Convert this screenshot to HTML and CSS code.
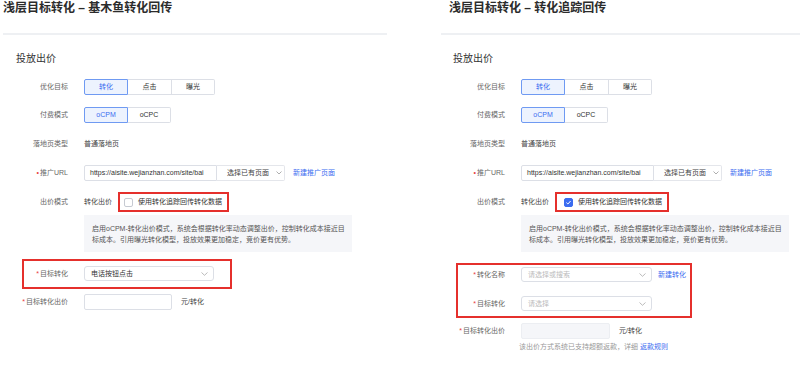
FILE: index.html
```html
<!DOCTYPE html>
<html lang="zh-CN">
<head>
<meta charset="utf-8">
<title>浅层目标转化</title>
<link rel="stylesheet" href="styles.css">
</head>
<body>
<div class="page">
  <div class="panel left">
    <div class="title">浅层目标转化 – 基木鱼转化回传</div>
    <div class="sep"></div>
    <div class="body">
      <div class="section">投放出价</div>
      <div class="row r1">
        <div class="label">优化目标</div>
        <div class="seg"><span class="on">转化</span><span>点击</span><span>曝光</span></div>
      </div>
      <div class="row r2">
        <div class="label">付费模式</div>
        <div class="seg"><span class="on">oCPM</span><span>oCPC</span></div>
      </div>
      <div class="row r3">
        <div class="label">落地页类型</div>
        <div class="value">普通落地页</div>
      </div>
      <div class="row r4">
        <div class="label"><span class="req">•</span>推广URL</div>
        <div class="ctrls">
          <div class="url">https://aisite.wejianzhan.com/site/bai</div>
          <div class="pick">选择已有页面<svg class="chev" width="6" height="4" viewBox="0 0 6 4"><polyline points="0.5,0.5 3,3 5.5,0.5" fill="none" stroke="#999" stroke-width="0.8"/></svg></div>
          <a class="link">新建推广页面</a>
        </div>
      </div>
      <div class="row r5">
        <div class="label">出价模式</div>
        <div class="ctrls">
          <span class="value">转化出价</span>
          <div class="mark cbox"><span class="check"></span><span>使用转化追踪回传转化数据</span></div>
        </div>
      </div>
      <div class="info">启用oCPM-转化出价模式，系统会根据转化率动态调整出价，控制转化成本接近目<br>标成本。引用曝光转化模型，投放效果更加稳定，竞价更有优势。</div>
      <div class="mark box-l">
        <div class="row in">
          <div class="label"><span class="req">*</span>目标转化</div>
          <div class="select filled">电话按钮点击<svg class="chev" width="7" height="4" viewBox="0 0 7 4"><polyline points="0.5,0.5 3.5,3.3 6.5,0.5" fill="none" stroke="#aaa" stroke-width="0.8"/></svg></div>
        </div>
      </div>
      <div class="row bid">
        <div class="label"><span class="req">*</span>目标转化出价</div>
        <div class="ctrls"><div class="num"></div><span class="unit">元/转化</span></div>
      </div>
    </div>
  </div>

  <div class="panel right">
    <div class="title">浅层目标转化 – 转化追踪回传</div>
    <div class="sep"></div>
    <div class="body">
      <div class="section">投放出价</div>
      <div class="row r1">
        <div class="label">优化目标</div>
        <div class="seg"><span class="on">转化</span><span>点击</span><span>曝光</span></div>
      </div>
      <div class="row r2">
        <div class="label">付费模式</div>
        <div class="seg"><span class="on">oCPM</span><span>oCPC</span></div>
      </div>
      <div class="row r3">
        <div class="label">落地页类型</div>
        <div class="value">普通落地页</div>
      </div>
      <div class="row r4">
        <div class="label"><span class="req">•</span>推广URL</div>
        <div class="ctrls">
          <div class="url">https://aisite.wejianzhan.com/site/bai</div>
          <div class="pick">选择已有页面<svg class="chev" width="6" height="4" viewBox="0 0 6 4"><polyline points="0.5,0.5 3,3 5.5,0.5" fill="none" stroke="#999" stroke-width="0.8"/></svg></div>
          <a class="link">新建推广页面</a>
        </div>
      </div>
      <div class="row r5">
        <div class="label">出价模式</div>
        <div class="ctrls">
          <span class="value">转化出价</span>
          <div class="mark cbox cbox-r"><span class="check on"><svg width="7" height="7" viewBox="0 0 7 7"><polyline points="1.4,3.6 2.9,5 5.6,2" fill="none" stroke="#fff" stroke-width="1"/></svg></span><span>使用转化追踪回传转化数据</span></div>
        </div>
      </div>
      <div class="info">启用oCPM-转化出价模式，系统会根据转化率动态调整出价，控制转化成本接近目<br>标成本。引用曝光转化模型，投放效果更加稳定，竞价更有优势。</div>
      <div class="mark box-r">
        <div class="row in">
          <div class="label"><span class="req">*</span>转化名称</div>
          <div class="ctrls">
            <div class="select">请选择或搜索<svg class="chev" width="7" height="4" viewBox="0 0 7 4"><polyline points="0.5,0.5 3.5,3.3 6.5,0.5" fill="none" stroke="#aaa" stroke-width="0.8"/></svg></div>
            <a class="link">新建转化</a>
          </div>
        </div>
        <div class="row in in2">
          <div class="label"><span class="req">*</span>目标转化</div>
          <div class="select">请选择<svg class="chev" width="7" height="4" viewBox="0 0 7 4"><polyline points="0.5,0.5 3.5,3.3 6.5,0.5" fill="none" stroke="#aaa" stroke-width="0.8"/></svg></div>
        </div>
      </div>
      <div class="row bid">
        <div class="label"><span class="req">*</span>目标转化出价</div>
        <div class="ctrls"><div class="num disabled"></div><span class="unit">元/转化</span></div>
      </div>
      <div class="hint">该出价方式系统已支持超额返款，详细 <a class="link">返款规则</a></div>
    </div>
  </div>
</div>
</body>
</html>
```

FILE: styles.css
```css
* { box-sizing: border-box; }
body {
  margin: 0;
  background: #fff;
  font-family: "Liberation Sans", "Noto Sans CJK SC", sans-serif;
  color: #333;
}
.page {
  display: flex;
  width: 800px;
  height: 366px;
  overflow: hidden;
}
.panel { width: 400px; flex: none; }
.title {
  font-size: 12px;
  line-height: 15px;
  font-weight: bold;
  color: #2c2c2c;
  margin-top: 1px;
  white-space: nowrap;
}
.left .title { margin-left: 3px; }
.right .title { margin-left: 49px; }
.sep {
  height: 2px;
  background: #eef0f3;
  margin-top: 17px;
}
.left .sep { margin-left: 3px; width: 384px; }
.right .sep { margin-left: 41px; }
.left .body { margin-left: 3px; }
.right .body { margin-left: 40px; }
.section {
  font-size: 10px;
  line-height: 14px;
  margin-top: 17px;
  padding-left: 13px;
  color: #333;
}
.row {
  display: grid;
  grid-template-columns: 65px auto;
  column-gap: 16px;
  align-items: center;
  height: 16px;
  font-size: 7px;
  line-height: 10px;
  white-space: nowrap;
}
.label { text-align: right; color: #666; }
.req { color: #e8413c; margin-right: 1px; }
.value { color: #444; }
.r1 { margin-top: 13px; }
.r2 { margin-top: 12px; }
.r3 { margin-top: 13px; }
.r4 { margin-top: 13px; }
.r5 { margin-top: 11px; height: 20px; }
.seg { display: flex; }
.seg span {
  width: 44px;
  height: 16px;
  border: 1px solid #dcdfe6;
  border-left: none;
  display: flex;
  align-items: center;
  justify-content: center;
  color: #333;
}
.seg span:first-child { border-left: 1px solid #dcdfe6; border-radius: 2px 0 0 2px; }
.seg span:last-child { width: 43px; border-radius: 0 2px 2px 0; }
.seg span.on {
  background: #edf3fe;
  border: 1px solid #6f9af2;
  color: #3b6cf0;
}
.seg span.on + span { border-left: none; }
.ctrls { display: flex; align-items: center; }
.url {
  width: 133px;
  height: 16px;
  border: 1px solid #dcdfe6;
  border-radius: 2px 0 0 2px;
  padding-left: 5px;
  display: flex;
  align-items: center;
  overflow: hidden;
  color: #333;
}
.pick {
  width: 68px;
  height: 16px;
  border: 1px solid #e4e6eb;
  border-left: none;
  border-radius: 0 2px 2px 0;
  display: flex;
  align-items: center;
  padding-left: 10px;
  color: #444;
}
.pick .chev { margin-left: 7px; }
.link { color: #3b6cf0; }
.ctrls > .link { margin-left: 8px; }
.mark { border: 2px solid #e5302c; }
.cbox {
  height: 20px;
  margin-left: 6px;
  display: flex;
  align-items: center;
  padding: 0 5px 0 4px;
  color: #333;
}
.cbox-r { padding-left: 7px; }
.check {
  width: 9px;
  height: 9px;
  border: 1px solid #c6cad2;
  border-radius: 2px;
  background: #fff;
  margin-right: 5px;
  display: flex;
  align-items: center;
  justify-content: center;
}
.check.on { background: #3b6cf0; border-color: #3b6cf0; }
.info {
  margin-top: 3px;
  margin-left: 81px;
  width: 268px;
  height: 37px;
  background: #f5f6f9;
  padding: 8px 0 0 8px;
  font-size: 7px;
  line-height: 11px;
  color: #555;
  white-space: nowrap;
}
.box-l {
  margin-top: 7px;
  margin-left: 19px;
  width: 210px;
  height: 30px;
  padding-top: 5px;
}
.box-l .row.in { grid-template-columns: 44px auto; height: 15px; }
.box-r {
  margin-top: 11px;
  margin-left: 16px;
  width: 236px;
  height: 55px;
  padding-top: 2px;
}
.box-r .row.in { grid-template-columns: 47px auto; height: 15px; }
.box-r .row.in2 { margin-top: 14px; }
.box-r .ctrls > .link { margin-left: 6px; }
.select {
  width: 131px;
  height: 15px;
  border: 1px solid #dcdfe6;
  border-radius: 3px;
  display: flex;
  align-items: center;
  justify-content: space-between;
  padding: 0 5px 0 6px;
  color: #bbb;
}
.select.filled { width: 130px; color: #333; }
.bid { margin-top: 5px; }
.num {
  width: 88px;
  height: 16px;
  border: 1px solid #dcdfe6;
  border-radius: 2px;
  background: #fff;
}
.num.disabled { width: 89px; background: #f5f6f9; border-color: #eceef2; }
.unit { margin-left: 9px; color: #444; }
.hint {
  margin-top: 3px;
  margin-left: 79px;
  font-size: 7px;
  line-height: 10px;
  color: #999;
  white-space: nowrap;
}
```
